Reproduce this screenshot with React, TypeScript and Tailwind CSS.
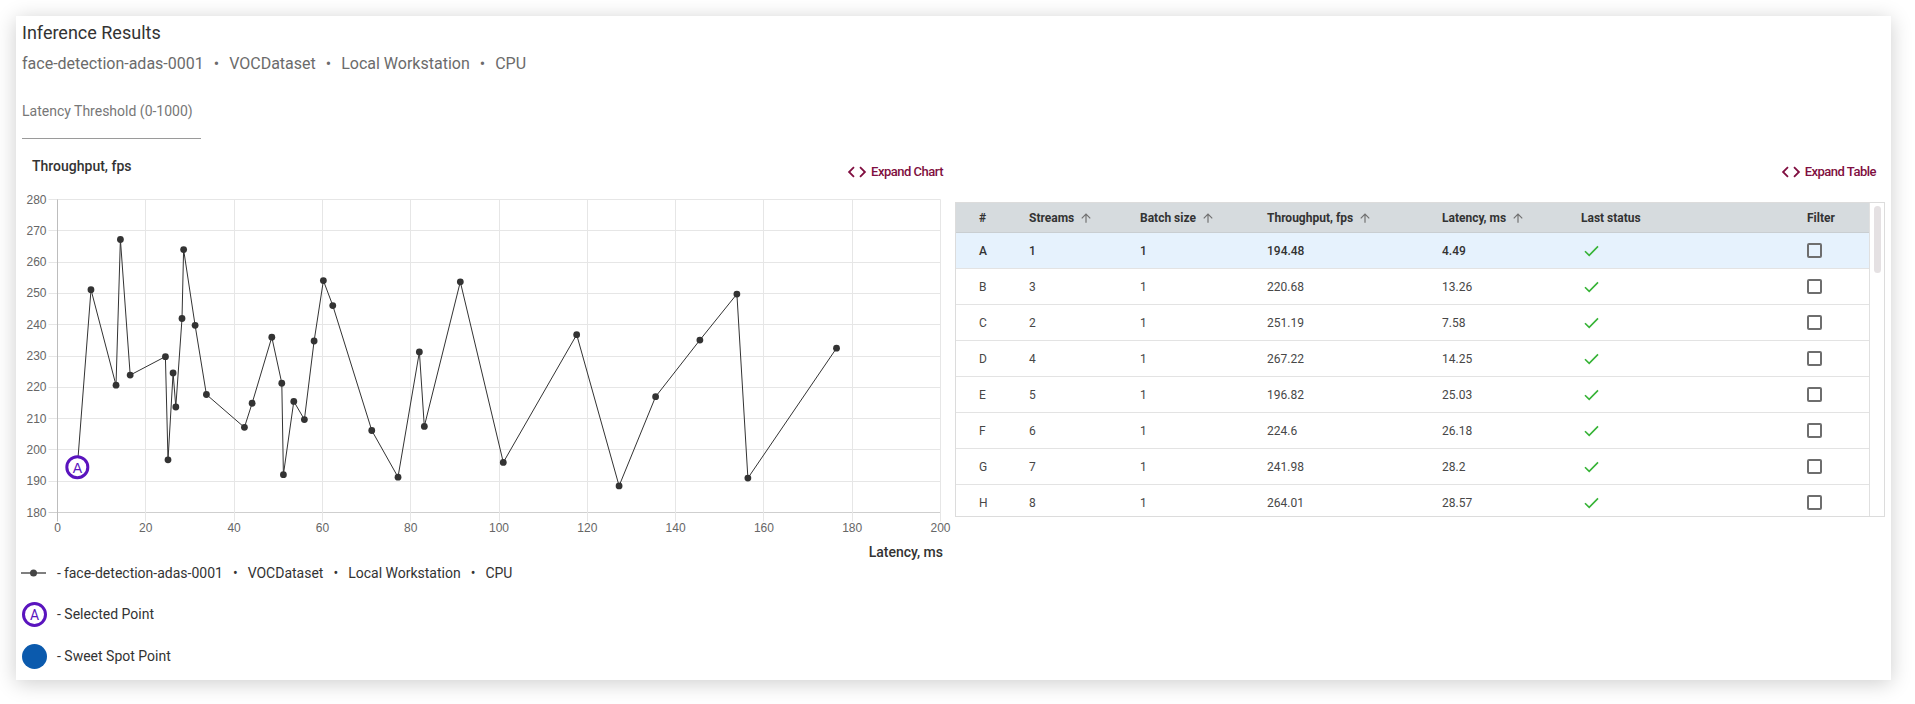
import React from 'react';
import { MdCode, MdArrowUpward } from 'react-icons/md';

// latency (ms), throughput (fps) — sorted by latency, first one is the selected point
const POINTS: [number, number][] = [
  [4.49, 194.48], [7.58, 251.19], [13.26, 220.68], [14.25, 267.22], [16.46, 223.9],
  [24.45, 229.8], [25.03, 196.82], [26.18, 224.6], [26.8, 213.7], [28.2, 241.98],
  [28.57, 264.01], [31.17, 239.8], [33.73, 217.7], [42.34, 207.2], [44.08, 214.9],
  [48.54, 236.0], [50.8, 221.3], [51.17, 192.1], [53.52, 215.5], [55.92, 209.7],
  [58.12, 234.8], [60.22, 254.1], [62.35, 246.1], [71.18, 206.2], [77.13, 191.3],
  [81.96, 231.3], [83.09, 207.5], [91.24, 253.7], [100.97, 196.0], [117.59, 236.8],
  [127.2, 188.5], [135.47, 217.0], [145.5, 235.1], [153.88, 249.8], [156.37, 191.0],
  [176.45, 232.5],
];

const ROWS = [
  { id: 'A', streams: 1, batch: 1, fps: '194.48', latency: '4.49' },
  { id: 'B', streams: 3, batch: 1, fps: '220.68', latency: '13.26' },
  { id: 'C', streams: 2, batch: 1, fps: '251.19', latency: '7.58' },
  { id: 'D', streams: 4, batch: 1, fps: '267.22', latency: '14.25' },
  { id: 'E', streams: 5, batch: 1, fps: '196.82', latency: '25.03' },
  { id: 'F', streams: 6, batch: 1, fps: '224.6', latency: '26.18' },
  { id: 'G', streams: 7, batch: 1, fps: '241.98', latency: '28.2' },
  { id: 'H', streams: 8, batch: 1, fps: '264.01', latency: '28.57' },
];

const X0 = 35.5;
const X1 = 918.5;
const Y0 = 16.5;
const Y1 = 329.5;
const sx = (v: number) => X0 + (v / 200) * (X1 - X0);
const sy = (t: number) => Y1 - ((t - 180) / 100) * (Y1 - Y0);
const crisp = (n: number) => Math.round(n - 0.5) + 0.5;

const TICK_FONT = "'Liberation Sans', Arial, sans-serif";
const PURPLE = '#5a14be';

const Crumbs = ({ className }: { className?: string }) => {
  const parts = ['face-detection-adas-0001', 'VOCDataset', 'Local Workstation', 'CPU'];
  return (
    <span className={className}>
      {parts.map((p, i) => (
        <React.Fragment key={p}>
          {i > 0 && <span className="mx-[10px]">•</span>}
          {p}
        </React.Fragment>
      ))}
    </span>
  );
};

const ExpandLink = ({ label }: { label: string }) => (
  <button className="flex items-center gap-[3px] text-[13px] leading-[18px] font-medium text-[#800e40] tracking-[-0.5px]">
    <MdCode size={22} />
    {label}
  </button>
);

const Chart = () => {
  const yTicks = [180, 190, 200, 210, 220, 230, 240, 250, 260, 270, 280];
  const xTicks = [0, 20, 40, 60, 80, 100, 120, 140, 160, 180, 200];
  const path = POINTS.map(([l, t], i) => `${i === 0 ? 'M' : 'L'}${sx(l).toFixed(1)} ${sy(t).toFixed(1)}`).join(' ');
  const [selL, selT] = POINTS[0];

  return (
    <svg width={921} height={378} className="block overflow-visible">
      {yTicks.map((t) => (
        <g key={t}>
          <line
            x1={26.5}
            x2={X1}
            y1={crisp(sy(t))}
            y2={crisp(sy(t))}
            stroke={t === 180 ? '#cfcfcf' : '#e6e6e6'}
          />
          <text
            x={24.5}
            y={sy(t)}
            textAnchor="end"
            dominantBaseline="central"
            fontFamily={TICK_FONT}
            fontSize={12}
            fill="#666"
          >
            {t}
          </text>
        </g>
      ))}
      {xTicks.map((v) => (
        <g key={v}>
          <line
            x1={crisp(sx(v))}
            x2={crisp(sx(v))}
            y1={Y0}
            y2={Y1 + 9}
            stroke={v === 0 ? '#bdbdbd' : '#e6e6e6'}
          />
          <text
            x={sx(v)}
            y={345}
            textAnchor="middle"
            dominantBaseline="central"
            fontFamily={TICK_FONT}
            fontSize={12}
            fill="#666"
          >
            {v}
          </text>
        </g>
      ))}

      <path d={path} fill="none" stroke="#333" strokeWidth={1} />
      {POINTS.slice(1).map(([l, t]) => (
        <circle key={`${l}-${t}`} cx={sx(l)} cy={sy(t)} r={3.4} fill="#333" />
      ))}

      <circle cx={sx(selL)} cy={sy(selT)} r={10.5} fill="#fff" stroke={PURPLE} strokeWidth={3} />
      <text
        x={sx(selL)}
        y={sy(selT) + 0.5}
        textAnchor="middle"
        dominantBaseline="central"
        fontFamily={TICK_FONT}
        fontSize={14}
        fill={PURPLE}
      >
        A
      </text>

      <text
        x={921}
        y={369}
        textAnchor="end"
        dominantBaseline="central"
        fontFamily="Roboto, sans-serif"
        fontWeight={500}
        fontSize={14}
        fill="#333"
      >
        Latency, ms
      </text>
    </svg>
  );
};

const SortHead = ({ label }: { label: string }) => (
  <span className="flex items-center">
    {label}
    <MdArrowUpward size={14} className="ml-[5px] text-[#707070]" />
  </span>
);

const CheckMark = () => (
  <svg width={15} height={12} viewBox="0 0 15 12">
    <path d="M1 6.2 L5.2 10.4 L14 1.4" fill="none" stroke="#36b336" strokeWidth={1.6} />
  </svg>
);

const COLS = 'grid grid-cols-[50px_111px_127px_175px_139px_226px_1fr] items-center';

const ResultsTable = () => (
  <div className="flex h-[315px] border border-[#dcdcdc] overflow-hidden">
    <div className="flex-1 border-r border-[#e0e0e0] overflow-hidden">
      <div className={`${COLS} h-[30px] bg-[#d6dbde] text-[12px] font-bold text-[#333] border-b border-[#c9ced1]`}>
        <span className="pl-[23px]">#</span>
        <span className="pl-[23px]"><SortHead label="Streams" /></span>
        <span className="pl-[23px]"><SortHead label="Batch size" /></span>
        <span className="pl-[23px]"><SortHead label="Throughput, fps" /></span>
        <span className="pl-[23px]"><SortHead label="Latency, ms" /></span>
        <span className="pl-[23px]">Last status</span>
        <span className="pl-[23px]">Filter</span>
      </div>
      {ROWS.map((r, i) => (
        <div
          key={r.id}
          className={`${COLS} h-[36px] shrink-0 border-b border-[#e3e3e3] text-[12px] ${
            i === 0 ? 'bg-[#e6f2fd] font-medium text-[#333]' : 'text-[#474747]'
          }`}
        >
          <span className="pl-[23px]">{r.id}</span>
          <span className="pl-[23px]">{r.streams}</span>
          <span className="pl-[23px]">{r.batch}</span>
          <span className="pl-[23px]">{r.fps}</span>
          <span className="pl-[23px]">{r.latency}</span>
          <span className="pl-[26px] flex"><CheckMark /></span>
          <span className="pl-[23px] flex">
            <span className="w-[15px] h-[15px] border-2 border-[#6e6e6e] rounded-[2px]" />
          </span>
        </div>
      ))}
    </div>
    <div className="w-[14px] flex justify-center pt-[3px]">
      <div className="w-[7px] h-[67px] rounded-full bg-[#e5e1e3]" />
    </div>
  </div>
);

export default function App() {
  return (
    <div className="min-h-screen bg-white pt-[16px] pl-[16px] font-['Roboto',sans-serif]">
      <div className="w-[1875px] h-[664px] bg-white shadow-[0_3px_20px_rgba(0,0,0,0.2)] pt-[5px] px-[6px]">
        <h1 className="text-[18px] leading-[24px] text-[#333]">Inference Results</h1>
        <Crumbs className="block mt-[8px] text-[16px] leading-[22px] text-[#6b6b6b]" />

        <div className="mt-[27px] w-[179px]">
          <div className="text-[14px] leading-[18px] text-[#777]">Latency Threshold (0-1000)</div>
          <div className="h-[19px] border-b border-[#9a9a9a]" />
        </div>

        <div className="flex gap-[12px] mt-[18px]">
          <div className="w-[921px] flex flex-col">
            <div className="flex justify-between items-start">
              <span className="pl-[10px] text-[14px] leading-[18px] font-medium text-[#333]">Throughput, fps</span>
              <span className="mt-[4px]"><ExpandLink label="Expand Chart" /></span>
            </div>
            <Chart />
            <div className="flex flex-col gap-[17px] text-[14px] text-[#333]">
              <div className="flex items-center gap-[10px] h-[24px]">
                <svg width={25} height={10} className="ml-[-1px] mr-[1px]">
                  <line x1={0} x2={25} y1={5} y2={5} stroke="#555" strokeWidth={1.5} />
                  <circle cx={12.5} cy={5} r={3.5} fill="#444" />
                </svg>
                <span>- </span>
                <Crumbs className="ml-[-7px]" />
              </div>
              <div className="flex items-center gap-[10px] h-[25px]">
                <span className="w-[25px] h-[25px] rounded-full border-[3px] border-[#5a14be] flex items-center justify-center text-[14px] text-[#5a14be] leading-none">
                  A
                </span>
                <span>- Selected Point</span>
              </div>
              <div className="flex items-center gap-[10px] h-[25px]">
                <span className="w-[25px] h-[25px] rounded-full bg-[#0b5aad]" />
                <span>- Sweet Spot Point</span>
              </div>
            </div>
          </div>

          <div className="w-[930px] flex flex-col">
            <div className="flex justify-end pr-[9px] mt-[4px]">
              <ExpandLink label="Expand Table" />
            </div>
            <div className="mt-[19px]">
              <ResultsTable />
            </div>
          </div>
        </div>
      </div>
    </div>
  );
}
